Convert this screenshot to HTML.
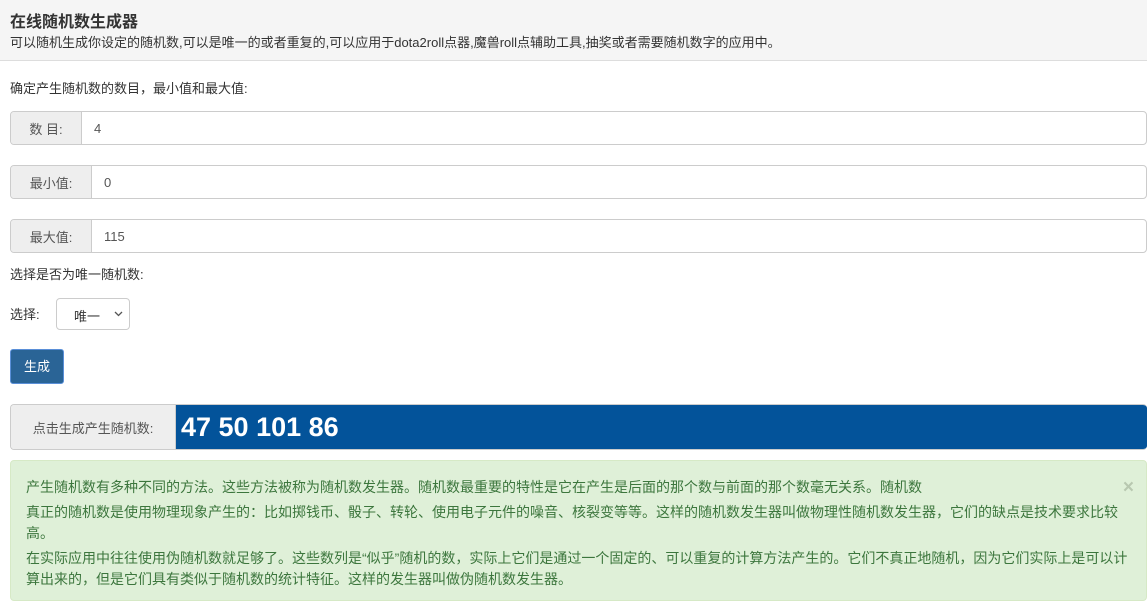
<!DOCTYPE html>
<html><head><meta charset="utf-8"><style>
*{box-sizing:border-box;margin:0;padding:0}
body{width:1147px;height:602px;overflow:hidden;font-family:"Liberation Sans","Noto Sans CJK SC",sans-serif;font-size:13px;color:#333;background:#fff;position:relative}
.hd{position:absolute;left:0;top:0;width:1147px;height:61px;background:#f5f5f5;border-bottom:1px solid #ddd}
.hd h1{position:absolute;left:10px;top:8px;font-size:16px;font-weight:bold;color:#333}
.hd p{position:absolute;left:10px;top:32px;font-size:13px;color:#333}
.t{position:absolute;left:10px;font-size:13px}
.ig{position:absolute;left:10px;width:1137px;height:34px;display:flex;border:1px solid #ccc;border-radius:4px;overflow:hidden}
.ig .l{background:#eee;border-right:1px solid #ccc;display:flex;align-items:center;justify-content:center;color:#555;font-size:13px}
.ig .v{flex:1;padding-left:12px;display:flex;align-items:center;color:#555;font-size:13px}
.sel{position:absolute;left:56px;top:298px;width:74px;height:32px;border:1px solid #ccc;border-radius:4px;font-size:13px;padding:7px 0 0 17px}
.btn{position:absolute;left:10px;top:349px;width:54px;height:35px;background:#2a6496;border:1px solid #5a8fd8;border-radius:3px;color:#fff;font-size:13px;text-align:center;line-height:33px}
.al{position:absolute;left:10px;top:460px;width:1137px;height:141px;background:#dff0d8;border:1px solid #d6e9c6;border-radius:4px;color:#3c763d;font-size:14px;padding:16px 12px 0 15px;line-height:21px}
.al p{margin-bottom:4px}
.x{position:absolute;right:12px;top:16px;font-size:19px;font-weight:bold;color:#b8c8b0}
</style></head><body>
<div class="hd"><h1>在线随机数生成器</h1><p>可以随机生成你设定的随机数,可以是唯一的或者重复的,可以应用于dota2roll点器,魔兽roll点辅助工具,抽奖或者需要随机数字的应用中。</p></div>
<div class="t" style="top:78px">确定产生随机数的数目，最小值和最大值:</div>
<div class="ig" style="top:111px"><div class="l" style="width:71px">数 目:</div><div class="v">4</div></div>
<div class="ig" style="top:165px"><div class="l" style="width:81px">最小值:</div><div class="v">0</div></div>
<div class="ig" style="top:219px"><div class="l" style="width:81px">最大值:</div><div class="v">115</div></div>
<div class="t" style="top:264px">选择是否为唯一随机数:</div>
<div class="t" style="top:304px">选择:</div>
<div class="sel">唯一<svg style="position:absolute;right:6px;top:12px" width="9" height="6" viewBox="0 0 9 6"><path d="M1 1l3.5 3.5L8 1" stroke="#555" stroke-width="1.3" fill="none"/></svg></div>
<div class="btn">生成</div>
<div class="ig" style="top:404px;height:46px;border-right:none"><div class="l" style="width:165px">点击生成产生随机数:</div><div class="v" style="background:#03539a;color:#fff;font-size:27px;font-weight:bold;padding-left:5px">47 50 101 86</div></div>
<div class="al"><span class="x">×</span>
<p>产生随机数有多种不同的方法。这些方法被称为随机数发生器。随机数最重要的特性是它在产生是后面的那个数与前面的那个数毫无关系。随机数</p>
<p>真正的随机数是使用物理现象产生的：比如掷钱币、骰子、转轮、使用电子元件的噪音、核裂变等等。这样的随机数发生器叫做物理性随机数发生器，它们的缺点是技术要求比较高。</p>
<p>在实际应用中往往使用伪随机数就足够了。这些数列是“似乎”随机的数，实际上它们是通过一个固定的、可以重复的计算方法产生的。它们不真正地随机，因为它们实际上是可以计算出来的，但是它们具有类似于随机数的统计特征。这样的发生器叫做伪随机数发生器。</p>
</div>
</body></html>
